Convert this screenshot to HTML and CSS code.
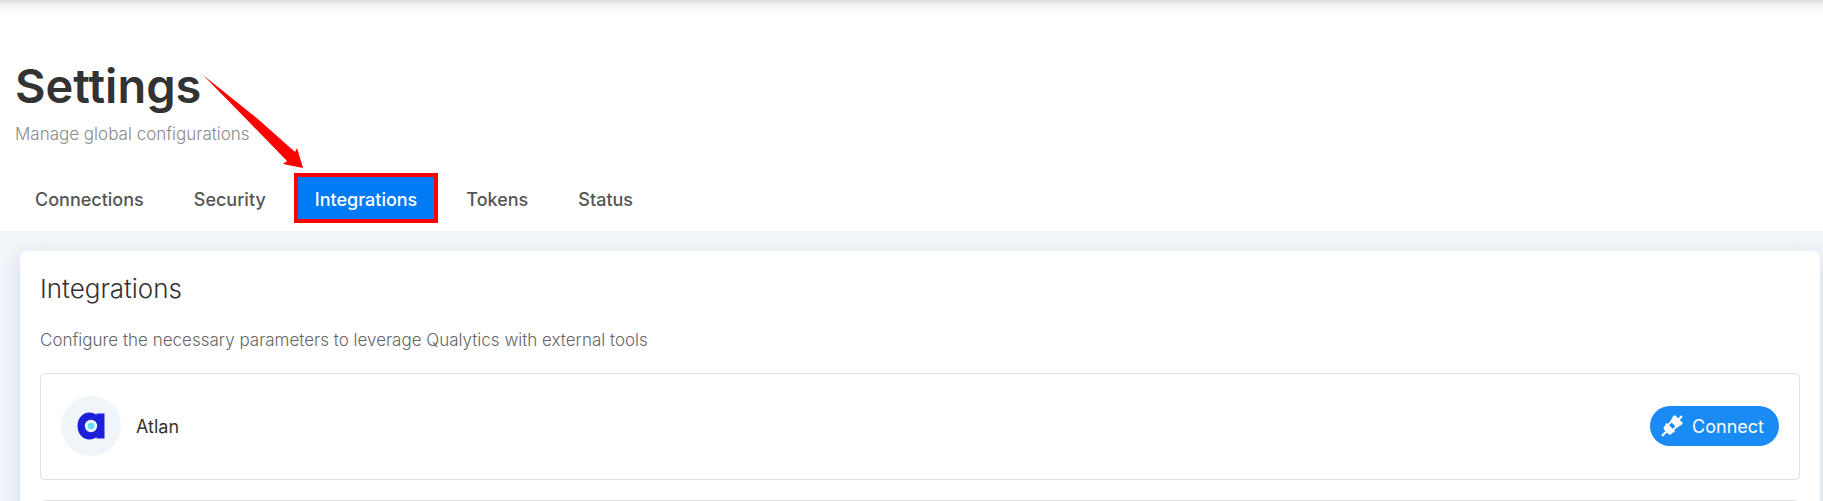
FILE: index.html
```html
<!DOCTYPE html>
<html lang="en">
<head>
<meta charset="utf-8">
<title>Settings</title>
<link rel="stylesheet" href="styles.css">
</head>
<body>
<header class="page-header">
  <h1 class="title">Settings</h1>
  <p class="subtitle">Manage global configurations</p>
  <nav class="tabs">
    <button class="tab" type="button">Connections</button>
    <button class="tab" type="button">Security</button>
    <button class="tab tab-active" type="button">Integrations</button>
    <button class="tab" type="button">Tokens</button>
    <button class="tab" type="button">Status</button>
  </nav>
  <svg class="pointer" width="104" height="98" viewBox="0 0 104 98" aria-hidden="true">
    <path d="M0 0 L56 45 L92 77 L94 73 L100 93 L80 89 L84 86 L48 49 Z" fill="#ff0000"/>
  </svg>
</header>
<main class="content">
  <section class="card">
    <h2 class="card-title">Integrations</h2>
    <p class="card-text">Configure the necessary parameters to leverage Qualytics with external tools</p>
    <ul class="list">
      <li class="row">
        <span class="avatar">
          <svg width="28" height="28" viewBox="0 0 28 28" aria-hidden="true">
            <path fill="#1b20d8" d="M12.500.5c3 0 5.500 1 7 2.500V1.500H27.500v25h-8V25c-1.500 1.600-4 2.500-7 2.500C5.500 27.500.5 21.500.5 14S5.500.5 12.500.5z"/>
            <circle cx="14" cy="14" r="6.200" fill="#f0f5fa"/>
            <circle cx="14" cy="14" r="3.300" fill="#62e1fc"/>
          </svg>
        </span>
        <span class="name">Atlan</span>
        <button class="connect" type="button">
          <svg width="22" height="22" viewBox="0 0 22 22" aria-hidden="true">
            <g transform="rotate(45 11 11)" fill="#fff">
              <path d="M9.900-3h2.200v4.200h3.900a1 1 0 0 1 1 1v2.600h-.8v2.400a1.600 1.600 0 0 1-1.600 1.600H7.400A1.600 1.600 0 0 1 5.800 7.200V4.800H5V2.200a1 1 0 0 1 1-1h3.900z"/>
              <path d="M6.500 8h2v4.500h5V8h2v4.500H17v2.100h-.8v2.200a2.400 2.400 0 0 1-2.400 2.400h-1.700V25H9.900v-5.800H8.200a2.400 2.400 0 0 1-2.400-2.400v-2.200H5v-2.100h1.500z"/>
            </g>
          </svg>
          <span>Connect</span>
        </button>
      </li>
      <li class="row"></li>
    </ul>
  </section>
</main>
</body>
</html>
```
FILE: styles.css
```css
* { box-sizing: border-box; }

html, body { height: 100%; }

body {
  margin: 0;
  display: flex;
  flex-direction: column;
  overflow: hidden;
  background: #f0f5fa;
  color: #333;
  font-family: Inter, "Open Sans", sans-serif;
}

h1, h2, p, ul { margin: 0; padding: 0; }

button { border: 0; font: inherit; }

.page-header {
  position: relative;
  flex: none;
  padding: 56px 13px 8px;
  background: linear-gradient(#dcdcdc, #f5f5f5 6px, #fff 14px);
}

.title {
  padding-left: 2px;
  font-size: 47px;
  line-height: 60px;
  font-weight: 600;
}

.subtitle {
  padding: 4px 2px 0;
  color: #8a8a8a;
  font-size: 17px;
  line-height: 28px;
  font-weight: 300;
}

.tabs {
  display: flex;
  gap: 6px;
  margin-top: 25px;
}

.tab {
  height: 50px;
  padding: 3px 22px 0;
  background: none;
  color: #555;
  font-size: 18px;
  font-weight: 500;
}

.tab-active {
  padding: 3px 17px 0;
  border: 4px solid #ff0000;
  background: #007bf5;
  color: #fff;
}

.pointer {
  position: absolute;
  top: 75px;
  left: 203px;
}

.content {
  flex: none;
  padding: 20px 3px 0 20px;
}

.card {
  padding: 20px 20px 40px;
  border-radius: 8px;
  background: #fff;
  box-shadow: 0 6px 20px rgba(30, 50, 80, 0.12);
}

.card-title {
  font-size: 26px;
  line-height: 36px;
  font-weight: 300;
}

.card-text {
  margin-top: 20px;
  color: #666;
  font-size: 17px;
  line-height: 26px;
  font-weight: 300;
}

.list {
  display: grid;
  gap: 20px;
  margin-top: 20px;
  list-style: none;
}

.row {
  display: flex;
  align-items: center;
  min-height: 107px;
  padding: 22px 20px 23px;
  border: 1px solid #e0e0e0;
  border-radius: 5px;
}

.avatar {
  display: flex;
  align-items: center;
  justify-content: center;
  width: 60px;
  height: 60px;
  border-radius: 50%;
  background: #f0f5fa;
}

.name {
  margin-left: 15px;
  font-size: 18px;
  font-weight: 400;
}

.connect {
  display: flex;
  align-items: center;
  gap: 9px;
  height: 40px;
  margin-left: auto;
  padding: 0 15px 0 11px;
  border-radius: 20px;
  background: #1a8af5;
  color: #fff;
  font-size: 18px;
}
```
